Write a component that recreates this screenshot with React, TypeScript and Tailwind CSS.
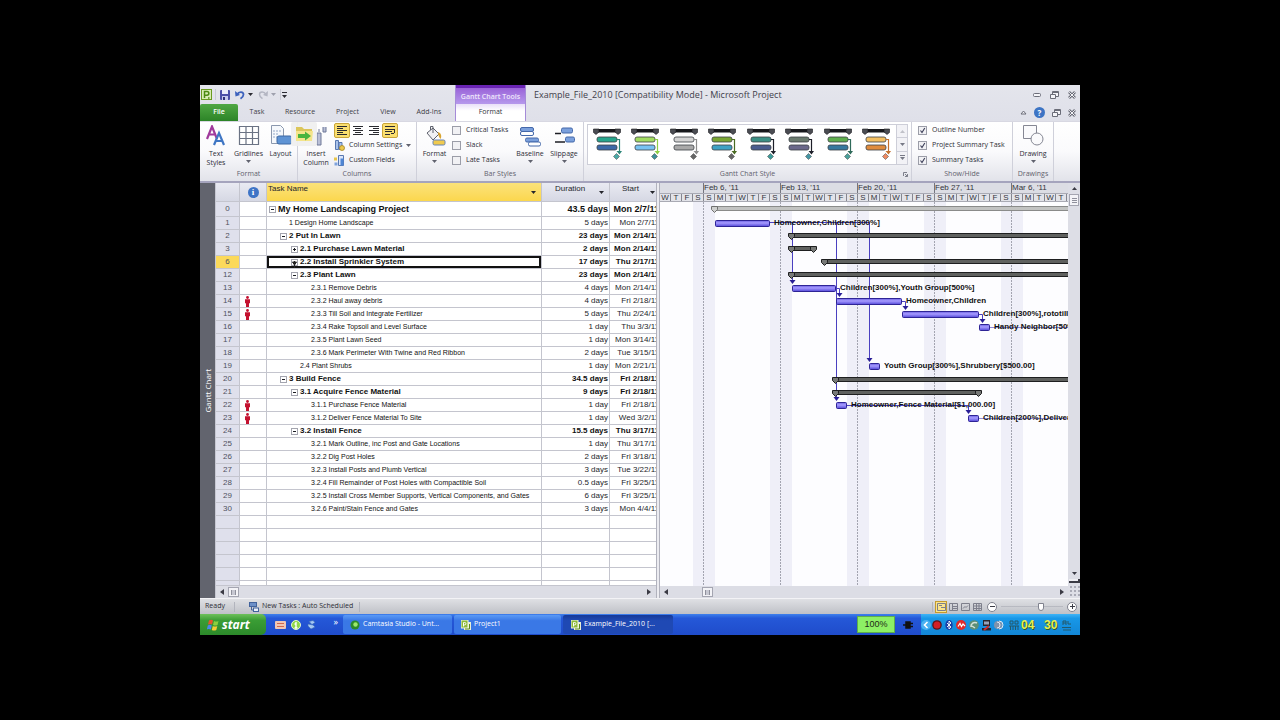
import React from "react";

type Row = {
  id: number;
  level: number;
  name: string;
  dur: string;
  start: string;
  box?: "-" | "+";
  person?: boolean;
};

const rows: Row[] = [
  { id: 0, level: 0, name: "My Home Landscaping Project", dur: "43.5 days", start: "Mon 2/7/11", box: "-" },
  { id: 1, level: 1, name: "1 Design Home Landscape", dur: "5 days", start: "Mon 2/7/11" },
  { id: 2, level: 1, name: "2 Put In Lawn", dur: "23 days", start: "Mon 2/14/11", box: "-" },
  { id: 3, level: 2, name: "2.1 Purchase Lawn Material", dur: "2 days", start: "Mon 2/14/11", box: "+" },
  { id: 6, level: 2, name: "2.2 Install Sprinkler System", dur: "17 days", start: "Thu 2/17/11", box: "+" },
  { id: 12, level: 2, name: "2.3 Plant Lawn", dur: "23 days", start: "Mon 2/14/11", box: "-" },
  { id: 13, level: 3, name: "2.3.1 Remove Debris", dur: "4 days", start: "Mon 2/14/11" },
  { id: 14, level: 3, name: "2.3.2 Haul away debris", dur: "4 days", start: "Fri 2/18/11", person: true },
  { id: 15, level: 3, name: "2.3.3 Till Soil and Integrate Fertilizer", dur: "5 days", start: "Thu 2/24/11", person: true },
  { id: 16, level: 3, name: "2.3.4 Rake Topsoil and Level Surface", dur: "1 day", start: "Thu 3/3/11" },
  { id: 17, level: 3, name: "2.3.5 Plant Lawn Seed", dur: "1 day", start: "Mon 3/14/11" },
  { id: 18, level: 3, name: "2.3.6 Mark Perimeter With Twine and Red Ribbon", dur: "2 days", start: "Tue 3/15/11" },
  { id: 19, level: 2, name: "2.4 Plant Shrubs", dur: "1 day", start: "Mon 2/21/11" },
  { id: 20, level: 1, name: "3 Build Fence", dur: "34.5 days", start: "Fri 2/18/11", box: "-" },
  { id: 21, level: 2, name: "3.1 Acquire Fence Material", dur: "9 days", start: "Fri 2/18/11", box: "-" },
  { id: 22, level: 3, name: "3.1.1 Purchase Fence Material", dur: "1 day", start: "Fri 2/18/11", person: true },
  { id: 23, level: 3, name: "3.1.2 Deliver Fence Material To Site", dur: "1 day", start: "Wed 3/2/11", person: true },
  { id: 24, level: 2, name: "3.2 Install Fence", dur: "15.5 days", start: "Thu 3/17/11", box: "-" },
  { id: 25, level: 3, name: "3.2.1 Mark Outline, inc Post and Gate Locations", dur: "1 day", start: "Thu 3/17/11" },
  { id: 26, level: 3, name: "3.2.2 Dig Post Holes", dur: "2 days", start: "Fri 3/18/11" },
  { id: 27, level: 3, name: "3.2.3 Install Posts and Plumb Vertical", dur: "3 days", start: "Tue 3/22/11" },
  { id: 28, level: 3, name: "3.2.4 Fill Remainder of Post Holes with Compactible Soil", dur: "0.5 days", start: "Fri 3/25/11" },
  { id: 29, level: 3, name: "3.2.5 Install Cross Member Supports, Vertical Components, and Gates", dur: "6 days", start: "Fri 3/25/11" },
  { id: 30, level: 3, name: "3.2.6 Paint/Stain Fence and Gates", dur: "3 days", start: "Mon 4/4/11" },
];

const indent = ["pl-[2px]", "pl-[13px]", "pl-[24px]", "pl-[35px]"];

function Caret({ className = "" }: { className?: string }) {
  return (
    <svg viewBox="0 0 5 3" className={`h-[3px] w-[5px] shrink-0 ${className}`}>
      <path d="M0 0h5L2.500 3z" fill="currentColor" />
    </svg>
  );
}

function SideArrow({ left }: { left?: boolean }) {
  return (
    <svg viewBox="0 0 4 6" className="h-[6px] w-[4px] shrink-0 text-[#3a3a44]">
      <path d={left ? "M4 0v6L0 3z" : "M0 0v6L4 3z"} fill="currentColor" />
    </svg>
  );
}

/* ---------- window header ---------- */

function QuickAccess() {
  return (
    <div className="flex h-[19px] items-center pl-[1px] text-[#2b2b33]">
      <svg viewBox="0 0 11 11" className="h-[11px] w-[11px]">
        <rect x=".5" y=".5" width="10" height="10" fill="#d9ecb4" stroke="#6a9a20" />
        <path d="M3.500 9V2.500h2.500a1.800 1.800 0 0 1 0 3.700H3.500M7 9h1.500" fill="none" stroke="#4d8a12" strokeWidth="1.500" />
      </svg>
      <span className="ml-[3px] h-[11px] w-px bg-[#c9cad4]" />
      <button aria-label="Save" className="ml-[4px]">
        <svg viewBox="0 0 10 10" className="h-[10px] w-[10px]">
          <rect width="10" height="10" rx="1" fill="#4a4fa8" />
          <rect x="2" y="0" width="6" height="4" fill="#e9ecfb" />
          <rect x="2" y="6" width="6" height="4" fill="#c5c9ee" />
          <rect x="3" y="7" width="2" height="3" fill="#2d2f78" />
        </svg>
      </button>
      <button aria-label="Undo" className="ml-[5px]">
        <svg viewBox="0 0 10 10" className="h-[10px] w-[10px]">
          <path d="M2 4.500C4 1 8.500 1.500 8.500 4.500c0 2-1.500 3.200-3 4.200" fill="none" stroke="#3d62bd" strokeWidth="1.800" />
          <path d="M0 1l.5 5.500L5 5z" fill="#3d62bd" />
        </svg>
      </button>
      <Caret className="ml-[3px]" />
      <button aria-label="Redo" className="ml-[5px]">
        <svg viewBox="0 0 10 10" className="h-[10px] w-[10px]">
          <path d="M8 4.500C6 1 1.500 1.500 1.500 4.500c0 2 1.500 3.200 3 4.200" fill="none" stroke="#b4b6c2" strokeWidth="1.500" />
          <path d="M10 1l-.5 5.500L5 5z" fill="#b4b6c2" />
        </svg>
      </button>
      <Caret className="ml-[3px] text-[#9fa1ad]" />
      <span className="ml-[4px] h-[11px] w-px bg-[#c9cad4]" />
      <button aria-label="Customize toolbar" className="ml-[1px]">
        <svg viewBox="0 0 5 6" className="h-[6px] w-[5px]">
          <path d="M0 0h5v1H0zM0 3h5L2.500 6z" fill="currentColor" />
        </svg>
      </button>
    </div>
  );
}

function RestoreIcon() {
  return (
    <svg viewBox="0 0 9 8" className="h-[8px] w-[9px]" fill="#f4f4f8" stroke="#6b6d78">
      <path d="M2.500.5h6v5h-6z" />
      <path d="M3 1.500h5" />
      <path d="M.5 3.500h5v4h-5z" />
    </svg>
  );
}

function CloseIcon() {
  return (
    <svg viewBox="0 0 8 8" className="h-[8px] w-[8px]">
      <path d="M1 1l6 6M7 1L1 7" stroke="#6b6d78" strokeWidth="2.600" />
      <path d="M1.200 1.200l5.600 5.600M6.800 1.200L1.200 6.800" stroke="#f4f4f8" strokeWidth="1" />
    </svg>
  );
}

function Header() {
  return (
    <header className="flex h-[36px] bg-linear-to-b from-[#e4e5ec] to-[#dfe0e9] text-[#3d3e48]">
      <div className="w-[255px] shrink-0">
        <QuickAccess />
        <nav className="flex h-[17px] items-center text-[7px]">
          <button className="h-[17px] w-[38px] rounded-t-[2px] bg-linear-to-b from-[#4fa743] to-[#2c8427] font-semibold text-white">File</button>
          <button className="w-[38px]">Task</button>
          <button className="w-[48px]">Resource</button>
          <button className="w-[47px]">Project</button>
          <button className="w-[34px]">View</button>
          <button className="w-[48px]">Add-Ins</button>
        </nav>
      </div>
      <div className="flex w-[71px] shrink-0 flex-col border-x border-[#a58bd8]">
        <div className="flex h-[19px] items-end justify-center border-t-3 border-[#6a24b4] bg-linear-to-b from-[#9a63d8] to-[#b698ec] text-[7px] leading-[14px] font-semibold whitespace-nowrap text-[#efe6fc]">
          Gantt Chart Tools
        </div>
        <button className="h-[17px] bg-linear-to-b from-[#e9dff8] to-white to-40% text-[7px] text-[#33343c]">Format</button>
      </div>
      <div className="flex flex-1 flex-col">
        <div className="flex h-[19px] items-center justify-between pr-[4px] pl-[8px]">
          <h1 className="text-[9px] text-[#3f404a]">Example_File_2010 [Compatibility Mode] - Microsoft Project</h1>
          <div className="flex items-center gap-[9px]">
            <button aria-label="Minimize">
              <svg viewBox="0 0 8 4" className="h-[4px] w-[8px]">
                <rect x=".5" y=".5" width="7" height="3" rx="1" fill="#f4f4f8" stroke="#6b6d78" />
              </svg>
            </button>
            <button aria-label="Restore"><RestoreIcon /></button>
            <button aria-label="Close"><CloseIcon /></button>
          </div>
        </div>
        <div className="flex h-[17px] items-center justify-end gap-[7px] pr-[4px]">
          <button aria-label="Collapse ribbon">
            <svg viewBox="0 0 7 5" className="h-[5px] w-[7px]">
              <path d="M1 4L3.500 1 6 4z" fill="#f4f4f8" stroke="#6b6d78" />
            </svg>
          </button>
          <button aria-label="Help" className="flex h-[11px] w-[11px] items-center justify-center rounded-full bg-[#3d74c4] text-[8px] leading-[10px] font-bold text-white">?</button>
          <button aria-label="Restore document"><RestoreIcon /></button>
          <button aria-label="Close document"><CloseIcon /></button>
        </div>
      </div>
    </header>
  );
}

/* ---------- ribbon ---------- */

function Group({ label, className, children, launcher }: { label: string; className: string; children?: React.ReactNode; launcher?: boolean }) {
  return (
    <section className={`flex flex-col border-r border-[#cfd0da] ${className}`}>
      <div className="flex h-[46px]">{children}</div>
      <div className="relative h-[13px] text-center text-[7px] leading-[12px] text-[#5f616d]">
        {label}
        {launcher && (
          <svg viewBox="0 0 5 5" className="absolute right-[3px] bottom-[4px] h-[5px] w-[5px]" fill="none" stroke="#7d7f8b">
            <path d="M.5 4V.5H4M2 2l2.500 2.500M4.500 2v2.500H2" />
          </svg>
        )}
      </div>
    </section>
  );
}

function Big({ label, caret, className, children }: { label: React.ReactNode; caret?: boolean; className: string; children: React.ReactNode }) {
  return (
    <button className={`flex shrink-0 flex-col items-center pt-[3px] text-[7px] leading-[9px] whitespace-nowrap text-[#2c2d36] ${className}`}>
      <svg viewBox="0 0 22 22" className="h-[22px] w-[22px] shrink-0">{children}</svg>
      <span className="mt-[2px]">{label}</span>
      {caret && <Caret className="mt-[2px] text-[#60626e]" />}
    </button>
  );
}

function Check({ label, on }: { label: string; on?: boolean }) {
  return (
    <label className="flex h-[15px] items-center gap-[5px] text-[7px] whitespace-nowrap text-[#2c2d36]">
      <span className="grid h-[9px] w-[9px] place-items-center">
        <input type="checkbox" defaultChecked={on} className="peer col-start-1 row-start-1 h-[9px] w-[9px] appearance-none border border-[#9b9da8] bg-[#f1f1f4]" />
        <svg viewBox="0 0 9 9" className="pointer-events-none col-start-1 row-start-1 hidden h-[9px] w-[9px] peer-checked:block">
          <path d="M2.500 4.500L4 6.500 6.800 2" fill="none" stroke="#3c3f58" strokeWidth="1.100" />
        </svg>
      </span>
      {label}
    </label>
  );
}

function AlignIcon({ d, on, label }: { d: string; on?: boolean; label: string }) {
  return (
    <button aria-label={label} className={`flex h-[15px] w-[16px] items-center justify-center rounded-[2px] ${on ? "border border-[#c9a53a] bg-[#fbdf6f]" : ""}`}>
      <svg viewBox="0 0 10 9" className="h-[9px] w-[10px]" shapeRendering="crispEdges">
        <path d={d} stroke="#2a2b30" fill="none" />
      </svg>
    </button>
  );
}

const galleryStyles = [
  ["#27a58c", "#3c69a8", "#2b8577", "#49a9a6"],
  ["#a2dc62", "#79c3f2", "#8fcf45", "#3c8f98"],
  ["#d4d4d4", "#a9a9a9", "#8c8c8c", "#666666"],
  ["#7aa634", "#3fa2c4", "#4a6b22", "#666666"],
  ["#3c8f84", "#4a5c8e", "#1d1e28", "#3c9b9a"],
  ["#6a7a6e", "#6a688a", "#1d1e28", "#4596a4"],
  ["#5fae4e", "#37789e", "#2f6a5a", "#4aa09a"],
  ["#f3bf62", "#e08c3e", "#c4702c", "#ee8a62"],
];

function GalleryItem({ c, index }: { c: string[]; index: number }) {
  return (
    <button aria-label={`Style ${index + 1}`} className="flex flex-1 items-start justify-center pt-[3px]">
      <svg viewBox="0 0 29 34" className="h-[34px] w-[29px]">
        <path d="M1 1h26v3.500H1z" fill="#17181c" />
        <path d="M.5 1h5.500v3L3 6.500.5 4.500zM22 1h5.500v3.500L25 6.500 22 4z" fill="#4a4c52" stroke="#17181c" strokeWidth=".6" />
        <rect x="4" y="9" width="20" height="5" rx="2" fill={c[0]} stroke="#3a3f44" strokeWidth=".8" />
        <rect x="4" y="17" width="20" height="5" rx="2" fill={c[1]} stroke="#3a3f44" strokeWidth=".8" />
        <path d="M24 11.500h2.500v12" fill="none" stroke={c[2]} strokeWidth="1.200" />
        <path d="M23.500 23h5.500l-2.500 3.500z" fill={c[2]} />
        <path d="M23.500 25.500l3 3-3 3-3-3z" fill={c[3]} stroke="#555" strokeWidth=".6" />
      </svg>
    </button>
  );
}

function Ribbon() {
  return (
    <div className="flex h-[62px] border-t border-b-2 border-t-[#d8d8e2] border-b-[#a5a4bd] bg-linear-to-b from-white via-[#fafafc] to-[#e2e3ea]">
      <Group label="Format" className="w-[98px] shrink-0">
        <Big className="w-[32px]" label={<>Text<br />Styles</>}>
          <g fill="none" strokeWidth="2.200">
            <path d="M2 14L7 1.500 12 14M4 9.500h6" stroke="#a03a9c" />
            <path d="M9 20l5-12 5 12M11 16h6" stroke="#3f76c4" />
          </g>
        </Big>
        <Big className="w-[33px]" label="Gridlines" caret>
          <path d="M1.500 1.500h19v18h-19zM1.500 7.500h19M1.500 13.500h19M8 1.500v18M14.500 1.500v18" fill="#fff" stroke="#6b7384" strokeWidth="1.200" />
        </Big>
        <Big className="w-[31px]" label="Layout">
          <path d="M1.500.5h9l3 3v15h-12z" fill="#f5f8fc" stroke="#8b98ae" />
          <path d="M3 6h8M3 9h6M3 12h4" stroke="#92a7c6" strokeDasharray="2 1" />
          <rect x="7" y="11" width="15" height="8" rx="2" fill="#5e93d4" stroke="#3c68a4" />
        </Big>
      </Group>

      <Group label="Columns" className="w-[119px] shrink-0">
        <div className="relative flex">
          <Big className="w-[36px]" label={<>Insert<br />Column</>}>
            <path d="M12 8h4v12h-4zM14 7V4M18 2v5h3V2" fill="#b9bfd6" stroke="#6f7898" />
          </Big>
          <svg viewBox="0 0 26 24" className="absolute top-0 left-[-7px] h-[24px] w-[26px]">
            <rect width="26" height="24" rx="2" fill="#efefef" opacity=".92" />
            <path d="M5 5h6l2 2h8v12H5z" fill="#dcc65a" />
            <path d="M5 9h17l-1 10H5z" fill="#f4e48a" />
            <path d="M7 12h7V9.500l6 4.500-6 4.500V16H7z" fill="#49b43e" />
          </svg>
        </div>
        <div className="flex flex-col pt-px">
          <div className="flex">
            <AlignIcon label="Align left" on d="M0 .5h10M0 2.500h6M0 4.500h10M0 6.500h6M0 8.500h10" />
            <AlignIcon label="Center" d="M0 .5h10M2 2.500h6M0 4.500h10M2 6.500h6M0 8.500h10" />
            <AlignIcon label="Align right" d="M0 .5h10M4 2.500h6M0 4.500h10M4 6.500h6M0 8.500h10" />
            <AlignIcon label="Wrap text" on d="M0 .5h10M0 3.500h10M0 5.500h7M0 8.500h5M9.500 3v4M6 7.500h3" />
          </div>
          <button className="flex h-[15px] items-center gap-[4px] text-[7px] whitespace-nowrap text-[#2c2d36]">
            <svg viewBox="0 0 11 11" className="h-[11px] w-[11px]">
              <path d="M1.500.5h3v9h-3zM5 2.500h3v7H5z" fill="#a9c2ea" stroke="#5878b0" />
              <circle cx="8" cy="8" r="2.500" fill="#edc94e" stroke="#a58424" strokeWidth=".8" />
            </svg>
            Column Settings
            <Caret className="text-[#60626e]" />
          </button>
          <button className="flex h-[15px] items-center gap-[4px] text-[7px] whitespace-nowrap text-[#2c2d36]">
            <svg viewBox="0 0 11 11" className="h-[11px] w-[11px]">
              <path d="M4.500.5h5v10h-5z" fill="#dbe6fa" stroke="#5878b0" />
              <path d="M6.500 3.500h3v7h-3z" fill="#4f86d4" />
              <path d="M0 2.500h3v3H0z" fill="#e8c64c" />
              <path d="M.5 7.500h3v3h-3z" fill="#7ea2dc" />
            </svg>
            Custom Fields
          </button>
        </div>
      </Group>

      <Group label="Bar Styles" className="w-[167px] shrink-0">
        <Big className="w-[35px]" label="Format" caret>
          <path d="M3 8l6-5 6 6-6 6z" fill="#f1f1f3" stroke="#5d606c" />
          <path d="M9 8V1.500h-2.500V5" fill="none" stroke="#5d606c" />
          <path d="M14 7c3 1 4 4 2.500 7-1.500-2-2.500-4-2.500-7z" fill="#d9a531" />
          <rect x="9" y="15" width="12" height="5" rx="1.500" fill="#f0ca4e" stroke="#6483b8" />
        </Big>
        <div className="w-[61px] shrink-0 pt-px">
          <Check label="Critical Tasks" />
          <Check label="Slack" />
          <Check label="Late Tasks" />
        </div>
        <Big className="w-[34px]" label="Baseline" caret>
          <rect x="1.500" y="2.500" width="13" height="4" rx="1.500" fill="#7ba0dc" stroke="#4468aa" />
          <rect x="1.500" y="6.500" width="13" height="4" rx="1.500" fill="#fff" stroke="#4468aa" />
          <rect x="6.500" y="13" width="13" height="4" rx="1.500" fill="#7ba0dc" stroke="#4468aa" />
          <rect x="9.500" y="17" width="12" height="4" rx="1.500" fill="#fff" stroke="#4468aa" />
        </Big>
        <Big className="w-[34px]" label="Slippage" caret>
          <path d="M2 8.500h6M2 17h10" stroke="#1d1e24" strokeWidth="1.500" />
          <rect x="8.500" y="3" width="11" height="5" rx="1.500" fill="#7ba0dc" stroke="#4468aa" />
          <rect x="12.500" y="12" width="9" height="5" rx="1.500" fill="#7ba0dc" stroke="#4468aa" />
        </Big>
      </Group>

      <Group label="Gantt Chart Style" className="min-w-0 flex-1" launcher>
        <div className="mx-[3px] mt-[2px] flex h-[41px] min-w-0 flex-1 border border-[#cdced8] bg-white">
          {galleryStyles.map((c, i) => (
            <GalleryItem key={i} c={c} index={i} />
          ))}
          <div className="flex w-[11px] shrink-0 flex-col divide-y divide-[#cdced8] border-l border-[#cdced8] bg-[#f2f2f6] text-[#777986]">
            <button aria-label="Previous styles" className="flex flex-1 items-center justify-center"><Caret className="rotate-180 opacity-40" /></button>
            <button aria-label="Next styles" className="flex flex-1 items-center justify-center"><Caret /></button>
            <button aria-label="More styles" className="flex flex-1 flex-col items-center justify-center gap-px"><span className="h-px w-[5px] bg-[#777986]" /><Caret /></button>
          </div>
        </div>
      </Group>

      <Group label="Show/Hide" className="w-[101px] shrink-0">
        <div className="pt-px pl-[6px]">
          <Check label="Outline Number" on />
          <Check label="Project Summary Task" on />
          <Check label="Summary Tasks" on />
        </div>
      </Group>

      <Group label="Drawings" className="w-[41px] shrink-0">
        <Big className="w-[40px]" label="Drawing" caret>
          <path d="M1.500.5h13v13h-13z" fill="#fafafc" stroke="#858793" />
          <circle cx="15" cy="14" r="6" fill="#fafafc" stroke="#858793" />
        </Big>
      </Group>
      <div className="w-[26px] shrink-0" />
    </div>
  );
}

/* ---------- task sheet ---------- */

function Person() {
  return (
    <svg viewBox="0 0 5 11" className="ml-[5px] h-[11px] w-[5px]">
      <circle cx="2.500" cy="1.500" r="1.400" fill="#c41230" />
      <path d="M0 3.300h5v4H4V11H1V7.300H0z" fill="#c41230" />
    </svg>
  );
}

function OutlineBox({ kind, label }: { kind: "-" | "+"; label: string }) {
  return (
    <button aria-label={`${kind === "-" ? "Collapse" : "Expand"} ${label}`} className="block h-[7px] w-[7px] shrink-0">
      <svg viewBox="0 0 7 7" className="h-[7px] w-[7px]" shapeRendering="crispEdges">
        <path d="M.5.5h6v6h-6z" fill="#fff" stroke="#a3a4ae" />
        <path d={kind === "-" ? "M2 3.500h3" : "M2 3.500h3M3.500 2v3"} stroke="#1c1d22" />
      </svg>
    </button>
  );
}

const line = "border-r border-b border-[#c4c5ce]";

function TaskTable() {
  return (
    <table className="w-[445px] table-fixed border-separate border-spacing-0 bg-white font-['Liberation_Sans',Arial,sans-serif] text-[8px] leading-[12px] text-[#24252b]">
      <colgroup>
        <col className="w-[24px]" />
        <col className="w-[27px]" />
        <col className="w-[275px]" />
        <col className="w-[68px]" />
        <col className="w-[51px]" />
      </colgroup>
      <thead>
        <tr className="h-[19px] bg-linear-to-b from-[#e9eaf2] to-[#d5d7e3] text-left">
          <th aria-label="Row" className={`${line} p-0`} />
          <th aria-label="Indicators" className={`${line} p-0`}>
            <span className="mx-auto mt-[1px] flex h-[11px] w-[11px] items-center justify-center rounded-full bg-[#3f74c6] font-['Liberation_Serif',serif] text-[9px] leading-[11px] font-bold text-white">i</span>
          </th>
          <th className={`${line} bg-linear-to-b from-[#fbe27a] to-[#fbd74c] p-0 align-top font-normal`}>
            <div className="flex justify-between pr-[5px] pl-[1px]">
              Task Name
              <Caret className="mt-[8px]" />
            </div>
          </th>
          <th className={`${line} p-0 align-top font-normal`}>
            <div className="flex justify-between pr-[5px] pl-[13px]">
              Duration
              <Caret className="mt-[8px]" />
            </div>
          </th>
          <th className={`${line} p-0 align-top font-normal`}>
            <div className="flex justify-between pr-[5px] pl-[12px]">
              Start
              <Caret className="mt-[8px]" />
            </div>
          </th>
        </tr>
      </thead>
      <tbody>
        {rows.map((r) => {
          const selected = r.id === 6;
          const weight = r.box ? "font-bold text-[#111]" : "";
          const size = r.id === 0 ? "text-[9px] h-[15px] leading-[14px]" : "h-[13px]";
          return (
            <tr key={r.id} className={`${size} ${weight}`}>
              <td className={`${line} p-0 text-center text-[8px] font-normal text-[#50525e] ${selected ? "bg-[#fbd95a]" : "bg-[#dfe0ec]"}`}>{r.id}</td>
              <td className={`${line} p-0`}>{r.person && <Person />}</td>
              <td className={`${line} relative overflow-hidden p-0`}>
                <div className={`flex items-center gap-[2px] whitespace-nowrap ${indent[r.level]} ${r.box ? "" : "text-[7px] text-[#111]"}`}>
                  {r.box ? <OutlineBox kind={r.box} label={r.name} /> : <span className="w-[7px] shrink-0" />}
                  <span>{r.name}</span>
                </div>
                {selected && (
                  <>
                    <span className="absolute inset-0 border-2 border-[#111]" />
                    <svg viewBox="0 0 7 10" className="absolute top-[3px] left-[24px] h-[10px] w-[7px]">
                      <path d="M3.500 2v8M1.500 3h4L3.500 6z" stroke="#222" fill="#222" />
                    </svg>
                  </>
                )}
              </td>
              <td className={`${line} p-0 pr-[1px] text-right whitespace-nowrap`}>{r.dur}</td>
              <td className={`${line} p-0 pr-[1px] text-right whitespace-nowrap`}>{r.start}</td>
            </tr>
          );
        })}
        {["h-[13px]", "h-[13px]", "h-[13px]", "h-[13px]", "h-[13px]", "h-[5px]"].map((h, i) => (
          <tr key={i} className={h}>
            <td className={`${line} bg-[#dfe0ec] p-0`} />
            <td className={`${line} p-0`} />
            <td className={`${line} p-0`} />
            <td className={`${line} p-0`} />
            <td className={`${line} p-0`} />
          </tr>
        ))}
      </tbody>
    </table>
  );
}

/* ---------- timeline and bars ---------- */

const DAY = 11;
const weeks = ["Feb 6, '11", "Feb 13, '11", "Feb 20, '11", "Feb 27, '11", "Mar 6, '11", "Mar 13, '11", "Mar 20, '11", "Mar 27, '11", "Apr 3, '11"];
const days = ["W", "T", "F", "S", ...weeks.flatMap(() => ["S", "M", "T", "W", "T", "F", "S"])];
const END = days.length * DAY;

const summaries = [
  { y: 31, a: 131, b: END },
  { y: 44, a: 131, b: 154 },
  { y: 57, a: 164, b: END },
  { y: 70, a: 131, b: END },
  { y: 175, a: 175, b: END },
  { y: 188, a: 175, b: 319 },
];

const bars = [
  { y: 18, x: 55, w: 55, tx: 114, t: "Homeowner,Children[300%]" },
  { y: 83, x: 132, w: 44, tx: 180, t: "Children[300%],Youth Group[500%]" },
  { y: 96, x: 176, w: 66, tx: 246, t: "Homeowner,Children" },
  { y: 109, x: 242, w: 77, tx: 323, t: "Children[300%],rototiller" },
  { y: 122, x: 319, w: 11, tx: 334, t: "Handy Neighbor[50%]" },
  { y: 161, x: 209, w: 11, tx: 224, t: "Youth Group[300%],Shrubbery[$500.00]" },
  { y: 200, x: 176, w: 11, tx: 191, t: "Homeowner,Fence Material[$1,000.00]" },
  { y: 213, x: 308, w: 11, tx: 323, t: "Children[200%],Delivery" },
];

const arrows = [
  [132, 82],
  [179, 95],
  [245, 108],
  [322, 121],
  [209, 160],
  [176, 199],
  [308, 212],
];

function Gantt() {
  return (
    <div className="min-w-0 flex-1 overflow-hidden bg-[#fdfdff] font-['Liberation_Sans',Arial,sans-serif]">
      <div className="flex h-[10px] bg-[#dcdde4] text-[8px] leading-[10px] text-[#33343c]">
        <span className="w-[43px] shrink-0" />
        {weeks.map((w) => (
          <span key={w} className="w-[77px] shrink-0 border-l border-[#74757f] whitespace-nowrap">{w}</span>
        ))}
      </div>
      <div className="flex h-[9px] border-y border-[#a9aab4] bg-[#e2e3e9] text-[8px] leading-[8px] text-[#33343c]">
        {days.map((d, i) => (
          <span key={i} className="w-[11px] shrink-0 border-r border-[#85868f] text-center">{d}</span>
        ))}
      </div>
      <svg width={END} height="384" className="block max-w-none" role="img" aria-label="Gantt chart">
        <defs>
          <linearGradient id="bar" x1="0" y1="0" x2="0" y2="1">
            <stop offset="0" stopColor="#6a5ee0" />
            <stop offset=".4" stopColor="#a79cff" />
            <stop offset="1" stopColor="#5247d8" />
          </linearGradient>
        </defs>
        {weeks.map((w, i) => (
          <g key={w}>
            <rect x={33 + i * 77} width="22" height="384" fill="#efeff8" />
            <path d={`M${43.5 + i * 77} 0v384`} stroke="#a3a4b0" strokeDasharray="2 1" />
          </g>
        ))}
        <g shapeRendering="crispEdges">
          <path d={`M54 4.500H${END}M54 8.500H${END}`} stroke="#8a8b8a" />
          <path d={`M54 6.500H${END}`} stroke="#c2c3c2" strokeWidth="3" />
        </g>
        <path d="M51.500 4.500h6v3l-3 3-3-3z" fill="#cfd0cf" stroke="#6f706f" />
        <g fill="none" stroke="#4a40c0">
          <path d="M110 20.500h99.500V158" />
          <path d="M132.500 20.500V80M176.500 20.500V197" />
          <path d="M176 86.500h3.500V93M242 99.500h3.500V106M319 112.500h3.500V119M187 203.500h121.500V210" />
          <path d="M330 125.500h78M319 216.500h89" opacity=".6" />
        </g>
        {summaries.map((s, i) => (
          <g key={i}>
            <rect x={s.a} y={s.y} width={s.b - s.a} height="5" fill="#1e1f20" />
            <rect x={s.a} y={s.y + 1} width={s.b - s.a} height="3" fill="#5f615f" />
            <path d={`M${s.a - 2.5} ${s.y + 0.5}h6v3l-3 3-3-3z`} fill="#777977" stroke="#1e1f20" />
            {s.b < END && <path d={`M${s.b - 3.5} ${s.y + 0.5}h6v3l-3 3-3-3z`} fill="#777977" stroke="#1e1f20" />}
          </g>
        ))}
        {arrows.map(([x, y]) => (
          <path key={`${x}-${y}`} d={`M${x - 2.5} ${y - 4}h6l-3 4z`} fill="#2a1f96" />
        ))}
        {bars.map((b) => (
          <g key={b.t}>
            <rect x={b.x + 0.5} y={b.y + 0.5} width={b.w - 1} height="6" rx="1" fill="url(#bar)" stroke="#2e2496" />
            <text x={b.tx} y={b.y + 5} fontSize="8" fontWeight="bold" fill="#111">{b.t}</text>
          </g>
        ))}
      </svg>
    </div>
  );
}

/* ---------- scroll bars ---------- */

function HThumb() {
  return (
    <span className="flex h-[10px] w-[11px] items-center justify-center border border-[#a4a5b1] bg-[#f3f3f7]">
      <span className="h-[5px] w-[5px] border-x border-[#8f909c] bg-[#c7c8d2]" />
    </span>
  );
}

function VScroll() {
  return (
    <div className="flex w-[12px] shrink-0 flex-col items-center bg-[#dddee6] pt-[4px] text-[#3a3a44]">
      <Caret className="rotate-180" />
      <span className="mt-[4px] flex h-[12px] w-[10px] flex-col items-center justify-center gap-px border border-[#a4a5b1] bg-[#f3f3f7]">
        <span className="h-px w-[5px] bg-[#8f909c]" />
        <span className="h-px w-[5px] bg-[#8f909c]" />
        <span className="h-px w-[5px] bg-[#8f909c]" />
      </span>
      <Caret className="mt-auto" />
      <span className="mt-[4px] h-[4px] w-[11px] border-r-2 border-b-2 border-[#3a3a44] bg-[#eeeef3]" />
      <span className="mt-[2px] h-[13px] w-[11px] bg-[radial-gradient(#a9aab6_1px,transparent_1px)] bg-size-[4px_4px]" />
    </div>
  );
}

function Workspace() {
  return (
    <main className="flex flex-1 bg-[#dddee6]">
      <div className="flex w-[16px] shrink-0 items-center justify-center border-r border-[#c7c8d2] bg-[#62646e] text-[8px] text-white">
        <span className="rotate-180 whitespace-nowrap [writing-mode:vertical-rl]">Gantt Chart</span>
      </div>
      <div className="flex w-[440px] shrink-0 flex-col overflow-hidden">
        <TaskTable />
        <div className="flex flex-1 items-center bg-[#dcdde5] pr-[5px] pl-[4px]">
          <SideArrow left />
          <span className="ml-[4px]"><HThumb /></span>
          <span className="ml-auto"><SideArrow /></span>
        </div>
      </div>
      <div className="w-[4px] shrink-0 border-x border-[#b1b2bd] bg-[#ececf1]" />
      <div className="flex min-w-0 flex-1 flex-col">
        <Gantt />
        <div className="flex h-[12px] items-center bg-[#dcdde5] pr-[4px] pl-[4px]">
          <SideArrow left />
          <span className="ml-[34px]"><HThumb /></span>
          <span className="ml-auto"><SideArrow /></span>
        </div>
      </div>
      <VScroll />
    </main>
  );
}

/* ---------- status bar and taskbar ---------- */

function ViewButton({ label, d, on }: { label: string; d: string; on?: boolean }) {
  return (
    <button aria-label={label} className={`flex h-[12px] w-[12px] items-center justify-center ${on ? "border border-[#c49b2e] bg-[#fbe48c]" : ""}`}>
      <svg viewBox="0 0 9 8" className="h-[8px] w-[9px]" fill="none" stroke="#7d7f8b">
        <path d={d} />
      </svg>
    </button>
  );
}

function StatusBar() {
  return (
    <footer className="flex h-[16px] items-center border-t border-[#f3f3f6] bg-linear-to-b from-[#dfe0e4] to-[#bfc1c7] pr-[3px] pl-[5px] text-[7px] text-[#2c2d36]">
      <span>Ready</span>
      <span className="ml-[9px] h-[10px] w-px bg-[#b2b4bd]" />
      <svg viewBox="0 0 10 10" className="ml-[14px] h-[10px] w-[10px]">
        <rect x=".5" y=".5" width="7" height="4" fill="#6b8fc8" stroke="#41629c" />
        <path d="M2.500 5v3h2" fill="none" stroke="#41629c" />
        <rect x="4.500" y="6" width="5" height="3.500" fill="#e9effa" stroke="#41629c" />
      </svg>
      <button className="ml-[3px]">New Tasks : Auto Scheduled</button>
      <span className="ml-[6px] h-[10px] w-px bg-[#b2b4bd]" />
      <div className="ml-auto flex items-center">
        <span className="mr-[2px] h-[10px] w-px bg-[#b2b4bd]" />
        <ViewButton on label="Gantt Chart view" d="M.5.5h8v7h-8zM2 2.500h3M4 4.500h4" />
        <ViewButton label="Task Usage view" d="M.5.5h8v7h-8zM3.500.5v7M3.500 3.500h5M3.500 5.500h5" />
        <ViewButton label="Team Planner view" d="M.5.5h8v7h-8zM2 5.500l2-2 1 1 2-2" />
        <ViewButton label="Resource Sheet view" d="M.5.5h8v7h-8zM.5 3h8M.5 5.500h8M3.500.5v7M6 .5v7" />
        <button aria-label="Zoom out" className="ml-[4px] flex h-[10px] w-[10px] items-center justify-center rounded-full border border-[#80828e] bg-white"><span className="h-px w-[5px] bg-[#3b3c46]" /></button>
        <label className="flex items-center px-[4px]">
          <input
            type="range"
            aria-label="Zoom"
            defaultValue={66}
            className="h-[9px] w-[62px] appearance-none bg-linear-to-b from-transparent from-45% via-[#a4a6b0] via-45% to-transparent to-56% [&::-webkit-slider-thumb]:h-[8px] [&::-webkit-slider-thumb]:w-[6px] [&::-webkit-slider-thumb]:appearance-none [&::-webkit-slider-thumb]:rounded-b-[3px] [&::-webkit-slider-thumb]:border [&::-webkit-slider-thumb]:border-[#80828e] [&::-webkit-slider-thumb]:bg-white"
          />
        </label>
        <button aria-label="Zoom in" className="flex h-[10px] w-[10px] items-center justify-center rounded-full border border-[#80828e] bg-white">
          <svg viewBox="0 0 5 5" className="h-[5px] w-[5px]"><path d="M0 2.500h5M2.500 0v5" stroke="#3b3c46" /></svg>
        </button>
      </div>
    </footer>
  );
}

function ProjectIcon() {
  return (
    <svg viewBox="0 0 10 10" className="h-[10px] w-[10px] shrink-0">
      <rect x="3" y="2" width="7" height="8" fill="#e8f0d6" />
      <rect width="7" height="8" fill="#8dba3a" stroke="#f2f7e4" />
      <path d="M2.500 6.500v-4h1.200a1.200 1.200 0 0 1 0 2.400H2.500" fill="none" stroke="#fff" />
      <path d="M8.500 4v5H4" fill="none" stroke="#5c8a1e" />
    </svg>
  );
}

function Taskbar() {
  return (
    <div className="flex h-[21px] items-stretch bg-linear-to-b from-[#3f80ec] via-[#2558d8] via-20% to-[#1f4ccb] text-[7px] text-white">
      <button className="flex w-[66px] items-center gap-[3px] rounded-r-[5px] bg-linear-to-b from-[#6cc05a] via-[#3a9d35] via-30% to-[#2c8a2a] pl-[7px]">
        <svg viewBox="0 0 12 12" className="h-[12px] w-[12px]">
          <path d="M2 1.500c1.500-1 3-.8 4 0L5 5.500c-1-.8-2.500-.8-4 0z" fill="#e8532c" />
          <path d="M7 2c1.500.8 3 .8 4.500 0l-1 4C9 6.800 7.500 6.800 6 6z" fill="#8ccf3e" />
          <path d="M.8 6.500c1.500-1 3-.8 4 0l-1 4c-1-.8-2.500-.8-4 0z" fill="#4b86ea" />
          <path d="M5.800 7c1.500.8 3 .8 4.500 0l-1 4c-1.500.8-3 .8-4.500 0z" fill="#f7cb35" />
        </svg>
        <span className="text-[12px] leading-[20px] font-bold italic">start</span>
      </button>
      <div className="flex w-[77px] shrink-0 items-center pl-[9px]">
        <svg viewBox="0 0 11 8" className="h-[8px] w-[11px]">
          <rect width="11" height="8" rx="1" fill="#f1c6b4" />
          <path d="M2 2.500h7M2 5.500h7" stroke="#d0684e" />
        </svg>
        <svg viewBox="0 0 10 10" className="ml-[5px] h-[10px] w-[10px]">
          <circle cx="5" cy="5" r="4.500" fill="#8fd84a" stroke="#e4f7cf" />
          <path d="M5 2v6M3.500 4H5M3.500 8h3" stroke="#fff" strokeWidth="1.400" />
        </svg>
        <svg viewBox="0 0 10 10" className="ml-[6px] h-[10px] w-[10px]">
          <path d="M2 1.500l4-1 2 2-3 2zM1 4l5 1 2 2-4 2-3-3z" fill="#a5c8f4" stroke="#3a6bb4" strokeWidth=".6" />
        </svg>
        <span className="ml-auto pr-[5px] pb-[6px] text-[9px] leading-[9px]">»</span>
      </div>
      <div className="flex min-w-0 flex-1 gap-[2px] py-px">
        <button className="flex w-[109px] items-center gap-[3px] rounded-[2px] bg-linear-to-b from-[#5a9af5] to-[#3a78e6] to-30% pl-[7px] whitespace-nowrap">
          <svg viewBox="0 0 10 10" className="h-[10px] w-[10px] shrink-0">
            <circle cx="5" cy="5" r="4.500" fill="#2d8a2a" />
            <circle cx="5.500" cy="4.500" r="2.200" fill="#9be86c" />
          </svg>
          Camtasia Studio - Unt...
        </button>
        <button className="flex w-[107px] items-center gap-[3px] rounded-[2px] bg-linear-to-b from-[#5a9af5] to-[#3a78e6] to-30% pl-[7px] whitespace-nowrap"><ProjectIcon />Project1</button>
        <button className="flex w-[110px] items-center gap-[3px] rounded-[2px] bg-linear-to-b from-[#163a98] to-[#1f49b4] to-30% pl-[8px] whitespace-nowrap"><ProjectIcon />Example_File_2010 [...</button>
      </div>
      <div className="my-[2px] flex w-[38px] shrink-0 items-center justify-center border border-[#5fae4a] bg-[#8df065] font-['Liberation_Sans',sans-serif] text-[9px] text-[#1d2a18]">100%</div>
      <div className="flex w-[26px] shrink-0 items-center justify-center">
        <svg viewBox="0 0 11 8" className="h-[8px] w-[11px]">
          <path d="M0 4h3M3 1h4v6H3zM7 2.500h3M7 5.500h3" stroke="#111" fill="#111" strokeWidth="1.500" />
        </svg>
      </div>
      <div className="flex w-[159px] shrink-0 items-center bg-linear-to-b from-[#3db4f6] via-[#1898e8] via-20% to-[#1286d6]">
        <svg viewBox="0 0 84 14" className="h-[14px] w-[84px] shrink-0">
          <circle cx="5" cy="7" r="5" fill="#4ab0f2" />
          <path d="M6.500 4L3.500 7l3 3" fill="none" stroke="#fff" strokeWidth="1.600" />
          <circle cx="16" cy="7" r="4.800" fill="#5a1418" />
          <circle cx="16" cy="7" r="3.500" fill="#d21f26" />
          <ellipse cx="28" cy="7" rx="3.700" ry="5" fill="#1a3fa8" />
          <path d="M26 5l4 4-2 2V3l2 2-4 4" fill="none" stroke="#fff" strokeWidth=".9" />
          <circle cx="40" cy="7" r="5" fill="#e02a2a" />
          <path d="M37 8.500l2-3 1.500 3L42 6l2 2" fill="none" stroke="#fff" strokeWidth="1.200" />
          <circle cx="53" cy="7" r="4.800" fill="#5e8f76" />
          <path d="M50 9a4 4 0 0 1 6-4M51 8l3 2" fill="none" stroke="#d6e3dc" strokeWidth="1.500" />
          <path d="M62 2h7v6h-7zM61 10h9v2.500h-9z" fill="#27262e" />
          <path d="M63 3.500h5v3h-5z" fill="#9aa3b8" />
          <path d="M63 12l5-4" stroke="#d32a2a" strokeWidth="1.800" />
          <circle cx="77" cy="7" r="4" fill="#7f93ac" />
          <path d="M76 4a3 3 0 0 1 0 6M78 3a4 4 0 0 1 0 8" fill="none" stroke="#e1e8f2" />
        </svg>
        <svg viewBox="0 0 10 12" className="ml-[4px] h-[12px] w-[10px] shrink-0" fill="none" stroke="#23596a">
          <path d="M1 2h3v3H1zM6 2h3v3H6zM0 7h10M1.500 7v4M4 7v4M6.500 7v4M9 7v4" />
        </svg>
        <span className="ml-[2px] w-[14px] font-['Liberation_Sans',sans-serif] text-[12px] font-bold text-[#e9ee4c] [text-shadow:1px_1px_#2f5a26]">04</span>
        <span className="ml-[9px] w-[14px] font-['Liberation_Sans',sans-serif] text-[12px] font-bold text-[#e9ee4c] [text-shadow:1px_1px_#2f5a26]">30</span>
        <svg viewBox="0 0 10 12" className="ml-[4px] h-[12px] w-[10px] shrink-0" fill="none" stroke="#23596a">
          <path d="M1 6V2h3v4M1 4h3M0 8.500h9M1 11h8M6 2v3h3" />
        </svg>
      </div>
    </div>
  );
}

export default function App() {
  return (
    <div className="flex min-h-screen flex-col bg-black px-[200px] py-[85px] font-['Open_Sans','Noto_Sans',sans-serif]">
      <div className="flex flex-1 flex-col overflow-hidden bg-[#dddee6]">
        <Header />
        <Ribbon />
        <Workspace />
        <StatusBar />
        <Taskbar />
      </div>
    </div>
  );
}
